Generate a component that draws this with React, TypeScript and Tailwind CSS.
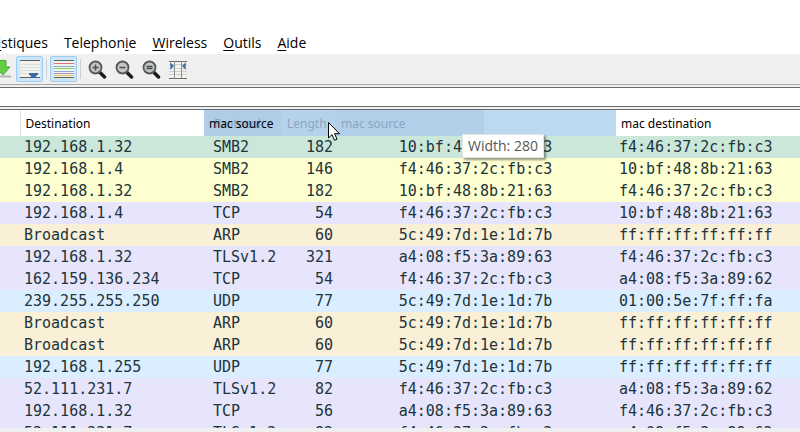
import { ReactNode } from "react";

const menus = [
  { before: "Stat", key: "i", after: "stiques", label: "Statistiques" },
  { before: "Telephon", key: "i", after: "e", label: "Telephonie" },
  { before: "", key: "W", after: "ireless", label: "Wireless" },
  { before: "", key: "O", after: "utils", label: "Outils" },
  { before: "", key: "A", after: "ide", label: "Aide" },
];

const packets = [
  { dst: "192.168.1.32", proto: "SMB2", len: 182, src: "10:bf:48:8b:21:63", mac: "f4:46:37:2c:fb:c3", color: "bg-[#cbe7da]" },
  { dst: "192.168.1.4", proto: "SMB2", len: 146, src: "f4:46:37:2c:fb:c3", mac: "10:bf:48:8b:21:63", color: "bg-[#feffd0]" },
  { dst: "192.168.1.32", proto: "SMB2", len: 182, src: "10:bf:48:8b:21:63", mac: "f4:46:37:2c:fb:c3", color: "bg-[#feffd0]" },
  { dst: "192.168.1.4", proto: "TCP", len: 54, src: "f4:46:37:2c:fb:c3", mac: "10:bf:48:8b:21:63", color: "bg-[#e6e5fc]" },
  { dst: "Broadcast", proto: "ARP", len: 60, src: "5c:49:7d:1e:1d:7b", mac: "ff:ff:ff:ff:ff:ff", color: "bg-[#faefd7]" },
  { dst: "192.168.1.32", proto: "TLSv1.2", len: 321, src: "a4:08:f5:3a:89:63", mac: "f4:46:37:2c:fb:c3", color: "bg-[#e6e5fc]" },
  { dst: "162.159.136.234", proto: "TCP", len: 54, src: "f4:46:37:2c:fb:c3", mac: "a4:08:f5:3a:89:62", color: "bg-[#e6e5fc]" },
  { dst: "239.255.255.250", proto: "UDP", len: 77, src: "5c:49:7d:1e:1d:7b", mac: "01:00:5e:7f:ff:fa", color: "bg-[#daeeff]" },
  { dst: "Broadcast", proto: "ARP", len: 60, src: "5c:49:7d:1e:1d:7b", mac: "ff:ff:ff:ff:ff:ff", color: "bg-[#faefd7]" },
  { dst: "Broadcast", proto: "ARP", len: 60, src: "5c:49:7d:1e:1d:7b", mac: "ff:ff:ff:ff:ff:ff", color: "bg-[#faefd7]" },
  { dst: "192.168.1.255", proto: "UDP", len: 77, src: "5c:49:7d:1e:1d:7b", mac: "ff:ff:ff:ff:ff:ff", color: "bg-[#daeeff]" },
  { dst: "52.111.231.7", proto: "TLSv1.2", len: 82, src: "f4:46:37:2c:fb:c3", mac: "a4:08:f5:3a:89:62", color: "bg-[#e6e5fc]" },
  { dst: "192.168.1.32", proto: "TCP", len: 56, src: "a4:08:f5:3a:89:63", mac: "f4:46:37:2c:fb:c3", color: "bg-[#e6e5fc]" },
  { dst: "52.111.231.7", proto: "TLSv1.2", len: 82, src: "f4:46:37:2c:fb:c3", mac: "a4:08:f5:3a:89:62", color: "bg-[#e6e5fc]" },
];

function LastPacketIcon() {
  return (
    <svg width="20" height="20" viewBox="0 0 20 20">
      <path d="M0 17.5 H11" stroke="#b5b5b5" strokeWidth="2" />
      <path d="M-2 1.5 H6 V8 H10 L3 16 L-5 8 H-2 Z" fill="#64cf45" stroke="#4ca53a" />
    </svg>
  );
}

function AutoScrollIcon() {
  return (
    <svg width="20" height="20" viewBox="0 0 20 20">
      <rect y="1" width="20" height="18" fill="#f2f2ec" />
      <path d="M0 1.5 H20 M0 18.5 H20" stroke="#5b6063" />
      <path d="M0 5.5 H20 M0 8.5 H20 M0 11.5 H20 M0 14.5 H20" stroke="#dcdfd9" />
      <path d="M9 14 H18 V16 H17 L15 19 H12 L10 16 H9 Z" fill="#3468a8" />
    </svg>
  );
}

function ColorizeIcon() {
  return (
    <svg width="20" height="20" viewBox="0 0 20 20">
      <rect y="1" width="20" height="18" fill="#f4f4ee" />
      <path d="M0 1.5 H20 M0 18.5 H20" stroke="#5b6063" />
      <path d="M0 4.5 H20" stroke="#e4716d" />
      <path d="M0 7.5 H20" stroke="#8fa5cc" />
      <path d="M0 9.5 H20" stroke="#84cf69" />
      <path d="M0 12.5 H20" stroke="#93a9c6" />
      <path d="M0 14.5 H20" stroke="#a68fb8" />
      <path d="M0 16.5 H20" stroke="#dcc458" />
    </svg>
  );
}

function ZoomIcon({ children }: { children: ReactNode }) {
  return (
    <svg width="20" height="20" viewBox="0 0 20 20">
      <path d="M11.5 13 L16.5 18" stroke="#1c1c1c" strokeWidth="3.5" strokeLinecap="round" />
      <circle cx="7.5" cy="8.5" r="6" fill="#c3c5c6" stroke="#55585a" strokeWidth="1.8" />
      <g stroke="#4a4d4f" strokeWidth="1.5">{children}</g>
    </svg>
  );
}

function ResizeColumnsIcon() {
  return (
    <svg width="20" height="20" viewBox="0 0 20 20">
      <rect y="2" width="18" height="18" fill="#f1f2ec" />
      <path d="M0 5.5 H18 M0 9.5 H18 M0 12.5 H18 M0 15.5 H18" stroke="#cdd2cb" />
      <path d="M0 2.5 H18 M0 19.5 H18" stroke="#666b6d" />
      <path d="M5.5 2 V20 M12.5 2 V20" stroke="#8b9092" />
      <path d="M2 5 V9 L4 7 Z M16 5 V9 L14 7 Z" fill="#3d6fa8" stroke="#3d6fa8" strokeWidth="1.5" />
    </svg>
  );
}

function App() {
  return (
    <div className="h-screen flex flex-col overflow-hidden bg-white pt-7 text-black">

      {/* Menu bar */}
      <nav className="flex h-[26px] shrink-0 items-center gap-4 pt-1 font-['Open_Sans',sans-serif] text-sm">
        {menus.map((menu) => (
          <button key={menu.label} className="shrink-0 first:-ml-7">
            {menu.before}
            <span className="underline underline-offset-2">{menu.key}</span>
            {menu.after}
          </button>
        ))}
      </nav>

      {/* Toolbar */}
      <div className="flex h-[31px] shrink-0 items-center border-b border-[#a9a9a9] bg-[#f0f0f0]">
        <button aria-label="Last packet" className="w-4 overflow-hidden">
          <LastPacketIcon />
        </button>
        <button aria-label="Auto scroll" className="flex h-[26px] w-[27px] items-center justify-center rounded-xs border border-[#99cdf5] bg-[#cfe6f8]">
          <AutoScrollIcon />
        </button>
        <div className="mx-[3px] h-5 w-px bg-[#d0d0d0]" />
        <button aria-label="Colorize" className="flex h-[26px] w-[27px] items-center justify-center rounded-xs border border-[#99cdf5] bg-[#cfe6f8]">
          <ColorizeIcon />
        </button>
        <div className="mx-[3px] h-5 w-px bg-[#d0d0d0]" />
        <div className="flex gap-[7px] pl-1">
          <button aria-label="Zoom in">
            <ZoomIcon><path d="M4.5 8.5 H10.5 M7.5 5.5 V11.5" /></ZoomIcon>
          </button>
          <button aria-label="Zoom out">
            <ZoomIcon><path d="M4.5 8.5 H10.5" /></ZoomIcon>
          </button>
          <button aria-label="Normal size">
            <ZoomIcon><path d="M4.5 7.5 H10.5 M4.5 9.5 H10.5" /></ZoomIcon>
          </button>
          <button aria-label="Resize columns">
            <ResizeColumnsIcon />
          </button>
        </div>
      </div>

      {/* Display filter */}
      <div className="shrink-0 bg-[#f0f0f0] py-0.5">
        <input aria-label="Display filter" className="block h-5 w-full border-y border-[#6b6b6b] bg-white outline-none" />
      </div>

      {/* Packet list */}
      <div className="relative min-h-0 flex-1 overflow-hidden border-t border-[#6b6b6b]">
        <table className="w-full table-fixed border-collapse text-left whitespace-nowrap">
          <colgroup>
            <col className="w-5" />
            <col className="w-[184px]" />
            <col className="w-[77px]" />
            <col className="w-[54px]" />
            <col className="w-[281px]" />
            <col />
          </colgroup>
          <thead className="font-['Noto_Sans',sans-serif] text-xs leading-6">
            <tr className="h-[26px]">
              <td />
              <th className="border-l border-[#e0e0e0] p-0 pt-0.5 pl-[5px] font-normal">Destination</th>
              <th className="bg-[#b0cde8] p-0 pt-0.5 pl-2.5 font-normal text-[#84a1bd]">Protocol</th>
              <th className="bg-[#b4d2ec] p-0 pt-0.5 pl-1.5 font-normal text-[#8ba6c0]">Length</th>
              <th className="bg-[#bbdaf2] p-0 font-normal text-[#8ba6c0]">
                <div className="h-[26px] w-[149px] bg-[#b2cfe9] pt-0.5 pl-1.5">mac source</div>
              </th>
              <th className="p-0 pt-0.5 pl-[5px] font-normal">mac destination</th>
            </tr>
          </thead>
          <tbody className="font-['DejaVu_Sans_Mono',monospace] text-[15px] leading-[22px] text-[#20343a]">
            {packets.map((p, i) => (
              <tr key={i} className={p.color}>
                <td />
                <td className="pl-1">{p.dst}</td>
                <td className="pl-[9px]">{p.proto}</td>
                <td className="pr-0.5 text-right">{p.len}</td>
                <td className="text-center">{p.src}</td>
                <td className="pl-[3px]">{p.mac}</td>
              </tr>
            ))}
          </tbody>
        </table>

        {/* Header being dragged */}
        <div className="absolute top-0 left-[204px] h-[26px] pt-0.5 pl-[5px] font-['Noto_Sans',sans-serif] text-xs leading-6">
          mac source
        </div>

        {/* Width tooltip */}
        <div role="tooltip" className="absolute top-6 left-[462px] border border-[#e4e4e4] bg-white px-[5px] font-['Open_Sans',sans-serif] text-sm leading-[22px] text-[#575757] shadow-[2px_2px_2px_#0006]">
          Width: 280
        </div>

        {/* Mouse pointer */}
        <svg className="absolute top-3 left-[328px]" width="12" height="19" viewBox="0 0 12 19">
          <path d="M0.5 0.5 V16 L4 12.7 L6.5 18.3 L9 17.2 L6.6 11.7 H11.5 Z" fill="white" stroke="black" />
        </svg>
      </div>

      {/* Pane splitter */}
      <div className="h-1 shrink-0 bg-[#f0f0f0]" />

    </div>
  );
}

export default App;
